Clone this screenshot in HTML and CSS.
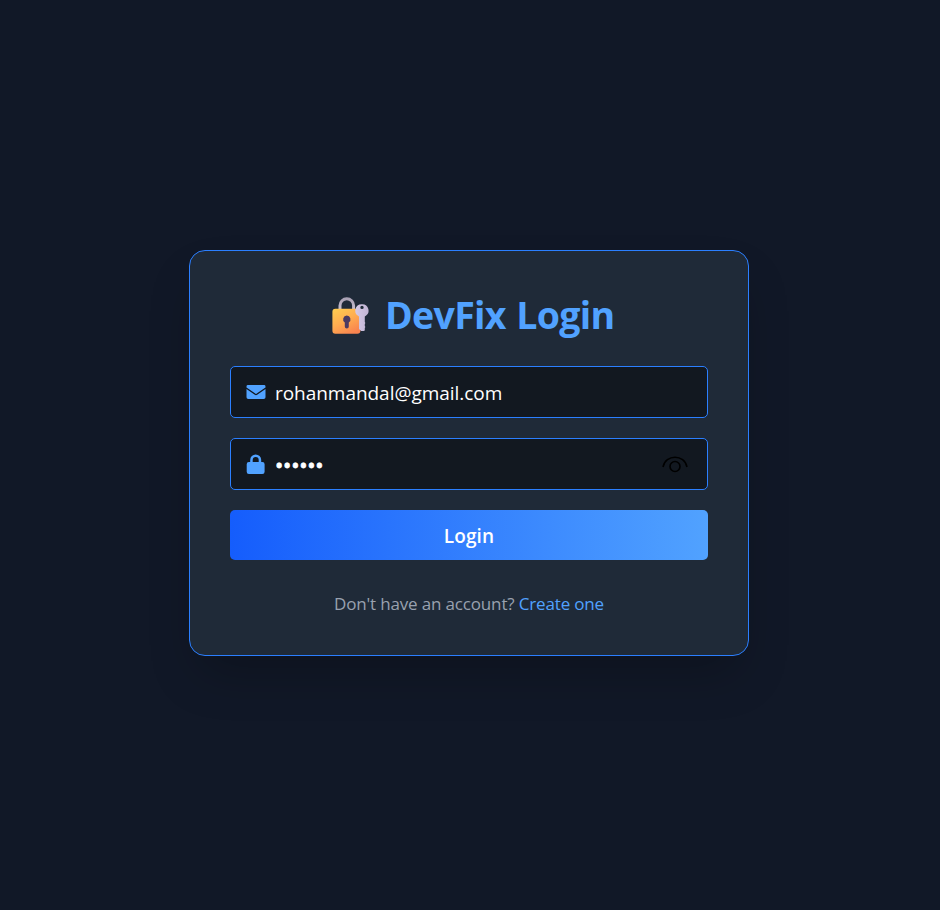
FILE: index.html
```html
<!DOCTYPE html>
<html lang="en">
<head>
<meta charset="utf-8">
<title>DevFix Login</title>
<link rel="stylesheet" href="styles.css">
</head>
<body>
<main class="card">
  <h1 class="title">
    <svg class="emblem" width="38" height="38" viewBox="0 0 38 38" aria-hidden="true">
      <defs>
        <linearGradient id="body" x1="0.1" y1="0" x2="0.7" y2="1"><stop offset="0" stop-color="#ffcb50"/><stop offset="0.5" stop-color="#ffad50"/><stop offset="1" stop-color="#f98350"/></linearGradient>
        <linearGradient id="shackle" x1="0" y1="0" x2="0" y2="1"><stop offset="0" stop-color="#aaa2b5"/><stop offset="1" stop-color="#cbc3d3"/></linearGradient>
        <linearGradient id="key" x1="0" y1="0" x2="1" y2="0"><stop offset="0" stop-color="#d5c9e6"/><stop offset="1" stop-color="#c2b5d4"/></linearGradient>
      </defs>
      <path d="M9 14V8.6a6.8 6.8 0 0 1 13.6 0v5.4" fill="none" stroke="url(#shackle)" stroke-width="3"/>
      <rect x="1.4" y="11.8" width="28" height="25" rx="3" fill="url(#body)"/>
      <path d="M15.8 18.6a3.7 3.7 0 0 0-2 6.8v4a2 2 0 0 0 4 0v-4a3.7 3.7 0 0 0-2-6.8z" fill="#4b3a62"/>
      <path fill-rule="evenodd" d="M30.8 7.2a6.4 6.4 0 0 0-2.8 12.2V32l2.2 2h2.3q1.3 0 1.3-1.1V31l.6-1-.6-1v-2l.6-1-.6-1v-5.6a6.4 6.4 0 0 0-3-12.2zm.2 1.5a1.7 1.7 0 1 1 0 3.4a1.7 1.7 0 0 1 0-3.4z" fill="url(#key)"/>
    </svg>
    <span>DevFix Login</span>
  </h1>
  <form class="form">
    <div class="field">
      <svg class="icon" width="20" height="20" viewBox="0 0 20 20" aria-hidden="true"><path d="M2.2 3h15.6A1.6 1.6 0 0 1 19.5 4.7v.9L10 12 .5 5.6v-.9A1.6 1.6 0 0 1 2.2 3z M.5 7.1 8.8 12.8Q10 13.6 11.2 12.8L19.5 7.1v8.1a1.8 1.8 0 0 1-1.8 1.8H2.3a1.8 1.8 0 0 1-1.8-1.8z"/></svg>
      <span class="email">rohanmandal@gmail.com</span>
    </div>
    <div class="field">
      <svg class="icon" width="20" height="20" viewBox="0 0 20 20" aria-hidden="true"><path fill-rule="evenodd" d="M4.2 8V6a5.5 5.5 0 0 1 11 0v2h1.2a2.2 2.2 0 0 1 2.2 2.2v7.6a2.2 2.2 0 0 1-2.2 2.2H2.9a2.2 2.2 0 0 1-2.2-2.2v-7.6A2.2 2.2 0 0 1 2.9 8zm2.5 0h6V6a3 3 0 0 0-6 0z"/></svg>
      <span class="password">••••••</span>
      <svg class="eye" width="26" height="20" viewBox="0 0 26 20" aria-hidden="true"><path d="M1 12C3.4-1 22.6-1 25 12"/><circle cx="13" cy="11.5" r="5"/></svg>
    </div>
    <button class="login" type="button"><span>Login</span></button>
  </form>
  <p class="signup"><span class="ask">Don't have an account?</span> <a class="create">Create one</a></p>
</main>
</body>
</html>
```
FILE: styles.css
```css
* { box-sizing: border-box; }
body {
  margin: 0;
  height: 910px;
  padding: 250px 0 0 189px;
  background: #111827;
  font-family: "Open Sans", "Noto Sans", sans-serif;
  overflow: hidden;
}
.card {
  width: 560px;
  height: 406px;
  padding: 39px 40px;
  border: 1px solid #2b7fff;
  border-radius: 16px;
  background: #1f2a38;
  box-shadow: 0 25px 50px -12px rgba(0, 0, 0, 0.25);
}
.title {
  display: flex;
  align-items: center;
  height: 52px;
  margin: 0 0 24px;
  padding-left: 101px;
  color: #51a2ff;
  font-size: 37.5px;
  font-weight: 700;
  line-height: 50px;
  white-space: nowrap;
}
.title span { height: 52px; margin-left: 16px; letter-spacing: -0.7px; word-spacing: 1.5px; }
.emblem { flex: none; }
.form { display: grid; gap: 20px; }
.field {
  display: flex;
  align-items: center;
  height: 52px;
  padding: 0 19px 0 14.5px;
  border: 1px solid #2b7fff;
  border-radius: 5px;
  background: #121820;
  color: #fff;
  font-size: 19px;
}
.icon { flex: none; margin-right: 9.5px; fill: #51a2ff; }
.email { padding-top: 1px; line-height: 50px; letter-spacing: -0.04px; }
.password { font-size: 22px; line-height: 50px; letter-spacing: -0.2px; -webkit-text-stroke: 0.8px #fff; }
.eye { margin: 1px 0 0 auto; fill: none; stroke: #000; stroke-width: 1.6; }
.login {
  height: 50px;
  padding: 2px 0 0;
  border: 0;
  border-radius: 5px;
  background: linear-gradient(to right, #155dfc, #51a2ff);
  color: #fff;
  font: 600 19px/48px "Open Sans", sans-serif;
  letter-spacing: 0.15px;
}
.signup {
  margin: 32px 0 0;
  text-align: center;
  color: #99a1af;
  font-size: 17px;
  line-height: 24px;
  letter-spacing: -0.16px;
  white-space: nowrap;
}
.create { color: #51a2ff; }
```
